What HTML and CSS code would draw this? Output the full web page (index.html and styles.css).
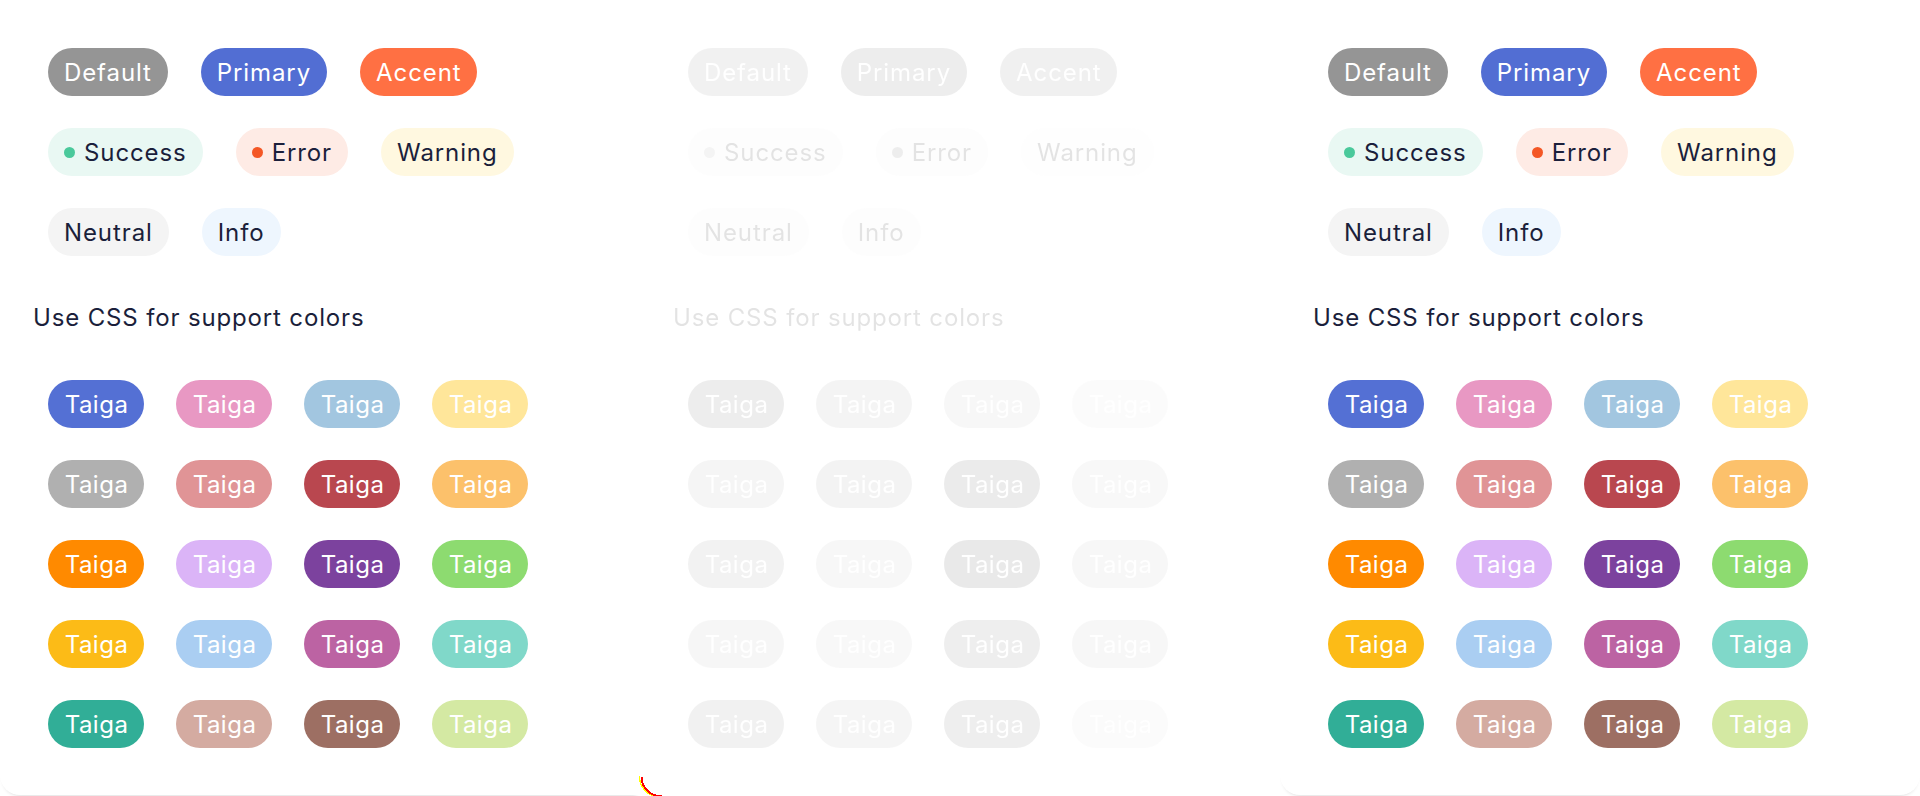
FILE: index.html
```html
<!DOCTYPE html>
<html lang="en">
<head>
<meta charset="utf-8">
<title>Badges</title>
<link rel="stylesheet" href="styles.css">
</head>
<body>
<div class="stage">
  <section class="panel panel-left">
    <div class="group">
      <div class="row">
        <span class="badge b-default">Default</span>
        <span class="badge b-primary">Primary</span>
        <span class="badge b-accent">Accent</span>
      </div>
      <div class="row">
        <span class="badge b-success"><span class="dot dot-success"></span>Success</span>
        <span class="badge b-error"><span class="dot dot-error"></span>Error</span>
        <span class="badge b-warning">Warning</span>
      </div>
      <div class="row">
        <span class="badge b-neutral">Neutral</span>
        <span class="badge b-info">Info</span>
      </div>
    </div>
    <p class="label">Use CSS for support colors</p>
    <div class="grid">
      <span class="badge tag s01">Taiga</span><span class="badge tag s02">Taiga</span><span class="badge tag s03">Taiga</span><span class="badge tag s04">Taiga</span>
      <span class="badge tag s05">Taiga</span><span class="badge tag s06">Taiga</span><span class="badge tag s07">Taiga</span><span class="badge tag s08">Taiga</span>
      <span class="badge tag s09">Taiga</span><span class="badge tag s10">Taiga</span><span class="badge tag s11">Taiga</span><span class="badge tag s12">Taiga</span>
      <span class="badge tag s13">Taiga</span><span class="badge tag s14">Taiga</span><span class="badge tag s15">Taiga</span><span class="badge tag s16">Taiga</span>
      <span class="badge tag s17">Taiga</span><span class="badge tag s18">Taiga</span><span class="badge tag s19">Taiga</span><span class="badge tag s20">Taiga</span>
    </div>
  </section>

  <section class="panel panel-ghost">
    <div class="group">
      <div class="row">
        <span class="badge b-default">Default</span>
        <span class="badge b-primary">Primary</span>
        <span class="badge b-accent">Accent</span>
      </div>
      <div class="row">
        <span class="badge b-success"><span class="dot dot-success"></span>Success</span>
        <span class="badge b-error"><span class="dot dot-error"></span>Error</span>
        <span class="badge b-warning">Warning</span>
      </div>
      <div class="row">
        <span class="badge b-neutral">Neutral</span>
        <span class="badge b-info">Info</span>
      </div>
    </div>
    <p class="label">Use CSS for support colors</p>
    <div class="grid">
      <span class="badge tag s01">Taiga</span><span class="badge tag s02">Taiga</span><span class="badge tag s03">Taiga</span><span class="badge tag s04">Taiga</span>
      <span class="badge tag s05">Taiga</span><span class="badge tag s06">Taiga</span><span class="badge tag s07">Taiga</span><span class="badge tag s08">Taiga</span>
      <span class="badge tag s09">Taiga</span><span class="badge tag s10">Taiga</span><span class="badge tag s11">Taiga</span><span class="badge tag s12">Taiga</span>
      <span class="badge tag s13">Taiga</span><span class="badge tag s14">Taiga</span><span class="badge tag s15">Taiga</span><span class="badge tag s16">Taiga</span>
      <span class="badge tag s17">Taiga</span><span class="badge tag s18">Taiga</span><span class="badge tag s19">Taiga</span><span class="badge tag s20">Taiga</span>
    </div>
  </section>

  <section class="panel panel-right">
    <div class="group">
      <div class="row">
        <span class="badge b-default">Default</span>
        <span class="badge b-primary">Primary</span>
        <span class="badge b-accent">Accent</span>
      </div>
      <div class="row">
        <span class="badge b-success"><span class="dot dot-success"></span>Success</span>
        <span class="badge b-error"><span class="dot dot-error"></span>Error</span>
        <span class="badge b-warning">Warning</span>
      </div>
      <div class="row">
        <span class="badge b-neutral">Neutral</span>
        <span class="badge b-info">Info</span>
      </div>
    </div>
    <p class="label">Use CSS for support colors</p>
    <div class="grid">
      <span class="badge tag s01">Taiga</span><span class="badge tag s02">Taiga</span><span class="badge tag s03">Taiga</span><span class="badge tag s04">Taiga</span>
      <span class="badge tag s05">Taiga</span><span class="badge tag s06">Taiga</span><span class="badge tag s07">Taiga</span><span class="badge tag s08">Taiga</span>
      <span class="badge tag s09">Taiga</span><span class="badge tag s10">Taiga</span><span class="badge tag s11">Taiga</span><span class="badge tag s12">Taiga</span>
      <span class="badge tag s13">Taiga</span><span class="badge tag s14">Taiga</span><span class="badge tag s15">Taiga</span><span class="badge tag s16">Taiga</span>
      <span class="badge tag s17">Taiga</span><span class="badge tag s18">Taiga</span><span class="badge tag s19">Taiga</span><span class="badge tag s20">Taiga</span>
    </div>
  </section>

  <svg class="glitch" width="32" height="26" viewBox="0 0 32 26" shape-rendering="crispEdges" aria-hidden="true">
    <path d="M1.5 4 A 22 21 0 0 0 23.5 25.5" fill="none" stroke="#ffff00" stroke-width="1.4"/>
    <path d="M3.5 5 A 20.5 19.5 0 0 0 24 24.5" fill="none" stroke="#ff0000" stroke-width="2"/>
  </svg>
</div>
</body>
</html>
```

FILE: styles.css
```css
* { box-sizing: border-box; }

html, body {
  margin: 0;
  padding: 0;
}

body {
  width: 1920px;
  height: 796px;
  overflow: hidden;
  background: #ffffff;
  font-family: Inter, "Noto Sans", "Liberation Sans", sans-serif;
  color: #1b1f3b;
}

.stage {
  position: relative;
  display: flex;
  height: 796px;
}

.panel {
  flex: 0 0 640px;
  height: 795px;
  background: #ffffff;
  padding: 48px 0 0 33px;
}

.panel-left {
  border-radius: 0 0 0 20px;
  box-shadow: 0 4px 4px -4px rgba(0, 0, 0, 0.2);
}

.panel-ghost {
  filter: grayscale(1);
  opacity: 0.12;
  background: transparent;
}

.panel-right {
  border-radius: 0 0 20px 20px;
  box-shadow: 0 4px 4px -4px rgba(0, 0, 0, 0.2);
}

.group {
  display: flex;
  flex-direction: column;
  gap: 32px;
  padding-left: 15px;
}

.row {
  display: flex;
  gap: 33px;
}

.badge {
  display: inline-flex;
  align-items: center;
  height: 48px;
  padding: 2px 16px 0;
  border-radius: 24px;
  font-size: 24px;
  line-height: 46px;
  letter-spacing: 0.9px;
  white-space: nowrap;
}

.b-default { background: #959595; color: #ffffff; }
.b-primary { background: #526ed3; color: #ffffff; }
.b-accent  { background: #ff7043; color: #ffffff; }
.b-success { background: #e9f8f3; color: #1b1f3b; }
.b-error   { background: #feebe5; color: #1b1f3b; }
.b-warning { background: #fff8e0; color: #1b1f3b; }
.b-neutral { background: #f4f4f4; color: #1b1f3b; }
.b-info    { background: #eef6fe; color: #1b1f3b; }

.dot {
  width: 11px;
  height: 11px;
  border-radius: 50%;
  margin: -2px 9px 0 0;
  flex: none;
}

.dot-success { background: #4ac99b; }
.dot-error   { background: #f45725; }

.label {
  margin: 46px 0;
  font-size: 24px;
  line-height: 32px;
  letter-spacing: 0.85px;
  color: #1b1f3b;
}

.grid {
  display: grid;
  grid-template-columns: repeat(4, 96px);
  gap: 32px;
  padding-left: 15px;
}

.tag {
  width: 96px;
  justify-content: center;
  padding: 2px 0 0 1px;
  letter-spacing: 0.5px;
  color: #ffffff;
}

.s01 { background: #5470d4; }
.s02 { background: #e898c3; }
.s03 { background: #a2c6e0; }
.s04 { background: #ffe69a; }
.s05 { background: #b0b0b0; }
.s06 { background: #e09496; }
.s07 { background: #b9474f; }
.s08 { background: #fcc16b; }
.s09 { background: #ff8a00; }
.s10 { background: #dbb4f7; }
.s11 { background: #7c429e; }
.s12 { background: #8ddb70; }
.s13 { background: #fcbb17; }
.s14 { background: #aacef2; }
.s15 { background: #bc63a3; }
.s16 { background: #80d8c9; }
.s17 { background: #31ae97; }
.s18 { background: #d4aba1; }
.s19 { background: #9d6f63; }
.s20 { background: #d4e9a3; }

.glitch {
  position: absolute;
  left: 638px;
  top: 772px;
}
```
